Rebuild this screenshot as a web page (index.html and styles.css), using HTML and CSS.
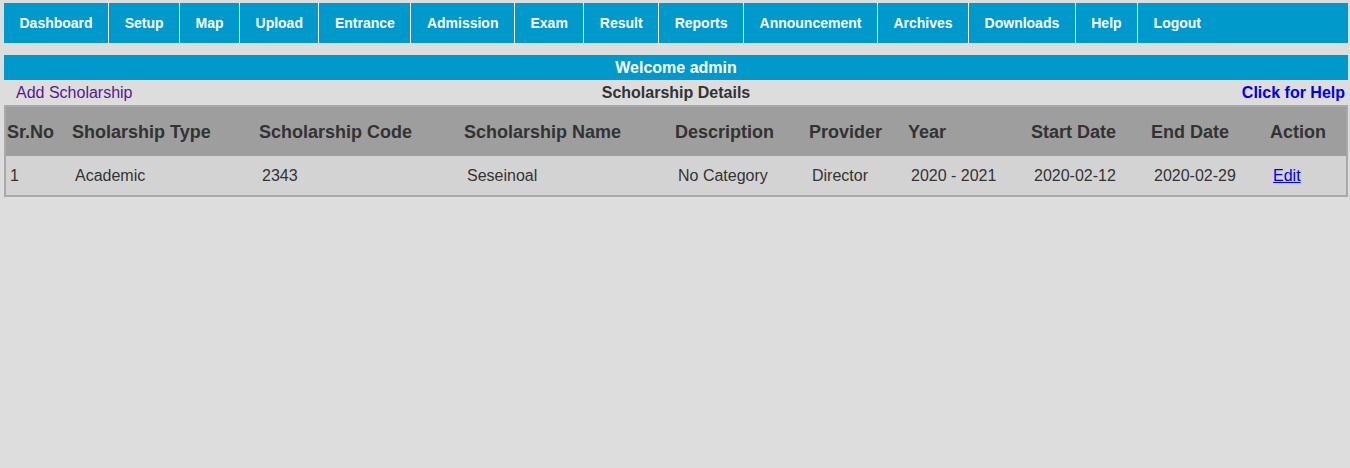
FILE: index.html
```html
<!DOCTYPE html>
<html>
<head>
<meta charset="utf-8">
<title>Scholarship Details</title>
<link rel="stylesheet" href="styles.css">
</head>
<body>
<ul class="nav">
  <li><a href="#">Dashboard</a></li>
  <li><a href="#">Setup</a></li>
  <li><a href="#">Map</a></li>
  <li><a href="#">Upload</a></li>
  <li><a href="#">Entrance</a></li>
  <li><a href="#">Admission</a></li>
  <li><a href="#">Exam</a></li>
  <li><a href="#">Result</a></li>
  <li><a href="#">Reports</a></li>
  <li><a href="#">Announcement</a></li>
  <li><a href="#">Archives</a></li>
  <li><a href="#">Downloads</a></li>
  <li><a href="#">Help</a></li>
  <li><a href="#">Logout</a></li>
</ul>
<div class="welcome">Welcome admin</div>
<div class="subbar">
  <a class="add" href="#">Add Scholarship</a>
  <span class="title">Scholarship Details</span>
  <a class="help" href="#">Click for Help</a>
</div>
<table class="grid">
  <colgroup>
    <col class="c1"><col class="c2"><col class="c3"><col class="c4"><col class="c5">
    <col class="c6"><col class="c7"><col class="c8"><col class="c9"><col class="c10">
  </colgroup>
  <thead>
    <tr>
      <th>Sr.No</th>
      <th>Sholarship Type</th>
      <th>Scholarship Code</th>
      <th>Scholarship Name</th>
      <th>Description</th>
      <th>Provider</th>
      <th>Year</th>
      <th>Start Date</th>
      <th>End Date</th>
      <th>Action</th>
    </tr>
  </thead>
  <tbody>
    <tr>
      <td>1</td>
      <td>Academic</td>
      <td>2343</td>
      <td>Seseinoal</td>
      <td>No Category</td>
      <td>Director</td>
      <td>2020 - 2021</td>
      <td>2020-02-12</td>
      <td>2020-02-29</td>
      <td><a class="edit" href="#">Edit</a></td>
    </tr>
  </tbody>
</table>
</body>
</html>
```
FILE: styles.css
```css
html, body {
  background: #dddddd;
}
body {
  margin: 3px 2px 0 4px;
  font-family: "Liberation Sans", Arial, sans-serif;
  color: #333333;
}
.nav {
  list-style: none;
  margin: 0;
  padding: 0;
  display: flex;
  height: 40px;
  background: #0099cc;
}
.nav li {
  display: flex;
  align-items: center;
  border-left: 1px solid #ffffff;
}
.nav li:first-child {
  border-left: none;
}
.nav a {
  display: block;
  padding: 0 15.5px;
  color: #ffffff;
  font-weight: bold;
  font-size: 14px;
  text-decoration: none;
  line-height: 40px;
}
.welcome {
  margin-top: 12px;
  height: 25px;
  line-height: 25px;
  background: #0099cc;
  color: #ffffff;
  font-weight: bold;
  font-size: 16px;
  text-align: center;
}
.subbar {
  height: 25px;
  display: grid;
  grid-template-columns: 1fr auto 1fr;
  align-items: center;
  font-size: 16px;
}
.subbar .add {
  padding-left: 12px;
  color: #551a8b;
  text-decoration: none;
}
.subbar .title {
  font-weight: bold;
  color: #333333;
}
.subbar .help {
  justify-self: end;
  padding-right: 3px;
  color: #0000ee;
  font-weight: bold;
  text-decoration: none;
}
.grid {
  width: 1344px;
  table-layout: fixed;
  border-collapse: separate;
  border-spacing: 0;
  border: 2px solid #a9a9a9;
}
.c1 { width: 65px; }
.c2 { width: 187px; }
.c3 { width: 205px; }
.c4 { width: 211px; }
.c5 { width: 134px; }
.c6 { width: 99px; }
.c7 { width: 123px; }
.c8 { width: 120px; }
.c9 { width: 119px; }
.c10 { width: 77px; }
.grid th {
  height: 48px;
  padding: 1px 0 0 1px;
  background: #9e9e9e;
  color: #333333;
  font-size: 18px;
  font-weight: bold;
  text-align: left;
  white-space: nowrap;
}
.grid td {
  height: 39px;
  padding: 0 0 0 4px;
  background: #d3d3d3;
  color: #333333;
  font-size: 16px;
  white-space: nowrap;
}
.grid .edit {
  color: #0000ee;
  text-decoration: underline;
}
```
